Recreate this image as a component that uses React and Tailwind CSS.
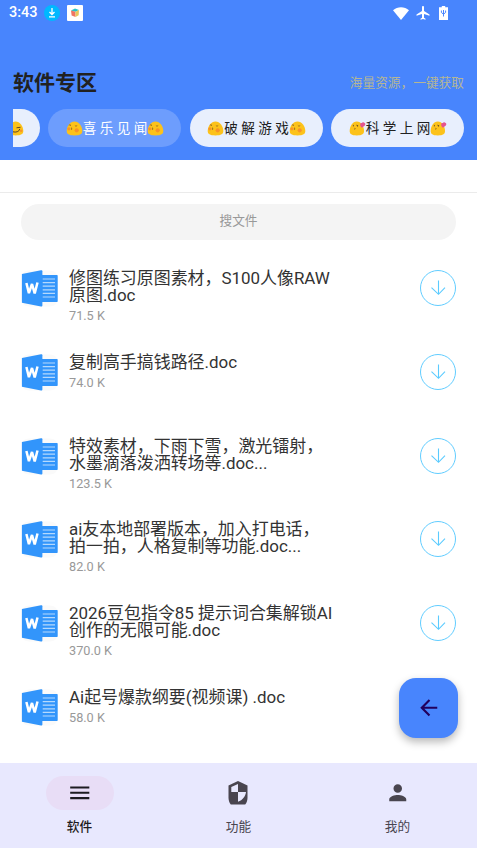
import React from 'react';
import { MdMenu, MdPerson, MdArrowBack } from 'react-icons/md';

const categories = [
  { label: '喜 乐 见 闻', Emoji: ShyFace, active: true },
  { label: '破 解 游 戏', Emoji: ShyFace, active: false },
  { label: '科 学 上 网', Emoji: KissFace, active: false },
];

const files = [
  { name: '修图练习原图素材，S100人像RAW\n原图.doc', size: '71.5 K' },
  { name: '复制高手搞钱路径.doc', size: '74.0 K' },
  { name: '特效素材，下雨下雪，激光镭射，\n水墨滴落泼洒转场等.doc...', size: '123.5 K' },
  { name: 'ai友本地部署版本，加入打电话，\n拍一拍，人格复制等功能.doc...', size: '82.0 K' },
  { name: '2026豆包指令85 提示词合集解锁AI\n创作的无限可能.doc', size: '370.0 K' },
  { name: 'Ai起号爆款纲要(视频课) .doc', size: '58.0 K' },
];

const tabs = [
  { label: '软件', icon: <MdMenu className="size-[25.5px]" />, active: true },
  { label: '功能', icon: <ShieldIcon />, active: false },
  { label: '我的', icon: <MdPerson className="size-[25.5px]" />, active: false },
];

function ShyFace() {
  return (
    <svg viewBox="0 0 17 15" className="h-[15px] w-[17px] shrink-0">
      <path d="M8.5.6C12.9.6 16.3 5.4 16.3 10c0 3-2 4.4-7.8 4.4S.7 13 .7 10C.7 5.4 4.1.6 8.5.6Z" fill="#fcc21b" />
      <circle cx="2.9" cy="7.8" r="1.6" fill="#f79329" />
      <circle cx="10.7" cy="9.3" r="2.1" fill="#f79329" />
      <path d="M2.800 4.200l1.500-.5.3 1.200M8.900 4.500l1 .7 1.300-.5M5.300 6.700c1 .2.700.8 0 .9.900.1.800.9-.2 1.100" fill="none" stroke="#80591f" strokeWidth="0.700" />
    </svg>
  );
}

function KissFace() {
  return (
    <svg viewBox="0 0 17 15" className="h-[15px] w-[17px] shrink-0">
      <path d="M7.8.6C12.1.6 15 5.4 15 10c0 3-1.8 4.4-7.2 4.4S.7 13 .7 10C.7 5.4 3.5.6 7.8.6Z" fill="#fcc21b" />
      <path d="M4.4 3.900v1.500M7.400 4.200l1.700.5-1 .8M5.600 7.300c1 .2.700.9 0 1" fill="none" stroke="#5d4223" strokeWidth="0.800" />
      <path d="M12.800 6.700C10.500 4.900 10.700 1.500 12.800 2.100c.8-1.700 3.800-.4 3.500 1.400-.3 1.600-2.200 2-3.500 3.200Z" fill="#e5548e" />
    </svg>
  );
}

function SmirkFace() {
  return (
    <svg viewBox="0 0 17 15" className="h-[15px] w-[17px] shrink-0">
      <path d="M8.5.6C12.9.6 16.3 5.4 16.3 10c0 3-2 4.4-7.8 4.4S.7 13 .7 10C.7 5.4 4.1.6 8.5.6Z" fill="#fcc21b" />
      <path d="M6 10.800c2.700.8 6.300 0 6.800-2.900M9.500 6.800l4-.5" fill="none" stroke="#5d4223" strokeWidth="1" />
      <circle cx="14.200" cy="9.800" r="1.300" fill="#f79329" />
    </svg>
  );
}

function ShieldIcon() {
  return (
    <svg viewBox="0 0 20 24" className="-ml-0.5 h-6 w-5">
      <path d="M10 0l9.5 4.600v12.200c0 2.900-1 5.300-2.300 6.800H2.800C1.500 22.100.5 19.700.5 16.800V4.600Z" fill="#49454f" />
      <path d="M10 3v8H3.300V6Z M10 11h8c-.4 4-3.300 8.200-8 9.800Z" fill="#e8e8fe" />
    </svg>
  );
}

function WordIcon() {
  return (
    <svg viewBox="0 0 37 37" className="size-[37px] shrink-0">
      <rect x="0.5" y="0.5" width="36" height="36" rx="7" fill="#fafafa" />
      <path d="M20 5h15.700c.6 0 1 .4 1 1v25c0 .6-.4 1-1 1H20Z" fill="#3295fb" />
      <path d="M21.500 9H34M21.500 12.600H34M21.500 16.200H34M21.500 19.800H34M21.500 23.400H34M21.500 27H34" stroke="#b5d9fd" strokeWidth="1.200" />
      <path d="M.9 4 20 .3c.8-.1 1.400.3 1.400 1v34.200c0 .7-.6 1.100-1.400 1L.9 32.700Z" fill="#3295fb" />
      <path d="M5.400 13 7.900 23.200 11 14 13.700 23.500 16.500 12.500" fill="none" stroke="#fff" strokeWidth="2.500" strokeLinejoin="bevel" />
    </svg>
  );
}

function DownloadButton() {
  return (
    <button className="flex size-9 shrink-0 items-center justify-center rounded-full border border-[#61cdff] text-[#5bcbff]">
      <svg viewBox="0 0 16 16" className="size-4">
        <path d="M8.500.5v14M1.500 7.700l7 6.600 6.500-6.600" fill="none" stroke="currentColor" strokeWidth="1.100" />
      </svg>
    </button>
  );
}

function StatusBar() {
  return (
    <div className="flex h-[26px] items-center pr-[29px] pl-[9px] text-white">
      <span className="w-[29px] text-[14.5px] font-medium">3:43</span>
      <svg viewBox="0 0 16 16" className="ml-1.5 size-4">
        <circle cx="8" cy="8" r="8" fill="#00b8ff" />
        <path d="M8 3v6M5.500 7 8 9.500 10.500 7M5 11.800h6" fill="none" stroke="#fff" strokeWidth="1.300" />
      </svg>
      <svg viewBox="0 0 16 16" className="ml-[7px] size-4">
        <rect width="16" height="16" rx="1" fill="#fff" />
        <path d="M4 5.500 8 3.500 12 5 8.500 6.800Z" fill="#27c4c8" />
        <path d="M4 5.500 8.500 6.800V12L4.600 10.500Z" fill="#ef7564" />
        <path d="M8.500 6.800 12 5 11.700 10.200 8.500 12Z" fill="#e8c65e" />
      </svg>
      <div className="ml-auto flex items-center">
        <svg viewBox="0 0 16 13" className="h-[13px] w-4">
          <path d="M8 13 0 3.200C4.500-.7 11.500-.7 16 3.200Z" fill="currentColor" />
        </svg>
        <svg viewBox="0 0 14 14" className="ml-[7px] size-3.5">
          <path d="M13.500 9.800V8.400L8 5V1.300C8 .6 7.600.1 7 .1S6 .6 6 1.300V5L.5 8.400v1.400L6 8.100v3.600l-1.500 1v1.100l2.500-.7 2.500.7v-1.100L8 11.700V8.100Z" fill="currentColor" />
        </svg>
        <svg viewBox="0 0 9 14" className="ml-[9px] h-3.5 w-[9px]">
          <path d="M2.800 0h3.400v1.300H9V14H0V1.300h2.800Z" fill="currentColor" />
          <path d="M4.500 10.500V4M2.400 4.500v2l2.100 1.700 2.100-1.700v-2" fill="none" stroke="#4885ff" strokeWidth="1" />
        </svg>
      </div>
    </div>
  );
}

const App = () => {
  return (
    <div className="relative flex h-[848px] w-[477px] flex-col overflow-hidden bg-white font-[Roboto,'Noto_Sans_CJK_SC',sans-serif]">
      <header className="h-40 shrink-0 bg-[#4885fd]">
        <StatusBar />
        <div className="mt-[41px] flex h-8 items-center justify-between px-[13px]">
          <h1 className="mt-0.5 text-[21px] font-bold text-[#212121]">软件专区</h1>
          <span className="text-[12.7px] text-[#b5b694]">海量资源，一键获取</span>
        </div>
        <div className="mx-[13px] mt-2.5 flex justify-end gap-[8.5px] overflow-hidden text-[13.6px]">
          <div className="flex h-[38px] w-[133px] shrink-0 items-center justify-end rounded-full bg-[#e8effd] pr-4">
            <SmirkFace />
          </div>
          {categories.map(({ label, Emoji, active }) => (
            <button
              key={label}
              className={`flex h-[38px] w-[133px] shrink-0 items-center justify-center whitespace-nowrap rounded-full pl-px ${
                active ? 'bg-[#6d9dfd] text-white' : 'bg-[#e8effd] text-[#212121]'
              }`}
            >
              <Emoji />
              <span>{label}</span>
              <Emoji />
            </button>
          ))}
        </div>
      </header>

      <div className="h-[33px] shrink-0 border-b border-[#ebebeb]" />

      <main className="min-h-0 flex-1 overflow-hidden px-[21px] pt-[10.5px]">
        <div className="flex h-9 items-center justify-center rounded-full bg-[#f4f4f4] pb-px text-[12.7px] text-[#999]">
          搜文件
        </div>
        <ul className="mt-[30.5px]">
          {files.map((file) => (
            <li key={file.size} className="flex h-[83.75px] items-start">
              <WordIcon />
              <div className="ml-[11px] flex-1">
                <div className="whitespace-pre text-[16.95px] leading-[17px] text-[#333]">{file.name}</div>
                <div className="mt-[3px] text-[12.7px] leading-[17px] text-[#999]">{file.size}</div>
              </div>
              <DownloadButton />
            </li>
          ))}
        </ul>
      </main>

      {/* Back button */}
      <button className="absolute top-[678px] left-[398.5px] flex size-[59.5px] items-center justify-center rounded-[17px] bg-[#4885fd] text-[#21005d] shadow-[0_4px_8px_rgba(0,0,0,0.28)]">
        <MdArrowBack className="size-[25.5px]" />
      </button>

      <nav className="grid h-[85px] shrink-0 grid-cols-3 bg-[#e8e8fe]">
        {tabs.map((tab) => (
          <div
            key={tab.label}
            className={`flex flex-col items-center pt-[13px] text-[12.7px] ${
              tab.active ? 'font-medium text-[#1d1b20]' : 'text-[#49454f]'
            }`}
          >
            <div className={`flex h-[34px] w-[68px] items-center justify-center rounded-full ${tab.active ? 'bg-[#e8ddf6]' : ''}`}>
              {tab.icon}
            </div>
            <span className="mt-[7px] leading-[19px]">{tab.label}</span>
          </div>
        ))}
      </nav>
    </div>
  );
};

export default App;
